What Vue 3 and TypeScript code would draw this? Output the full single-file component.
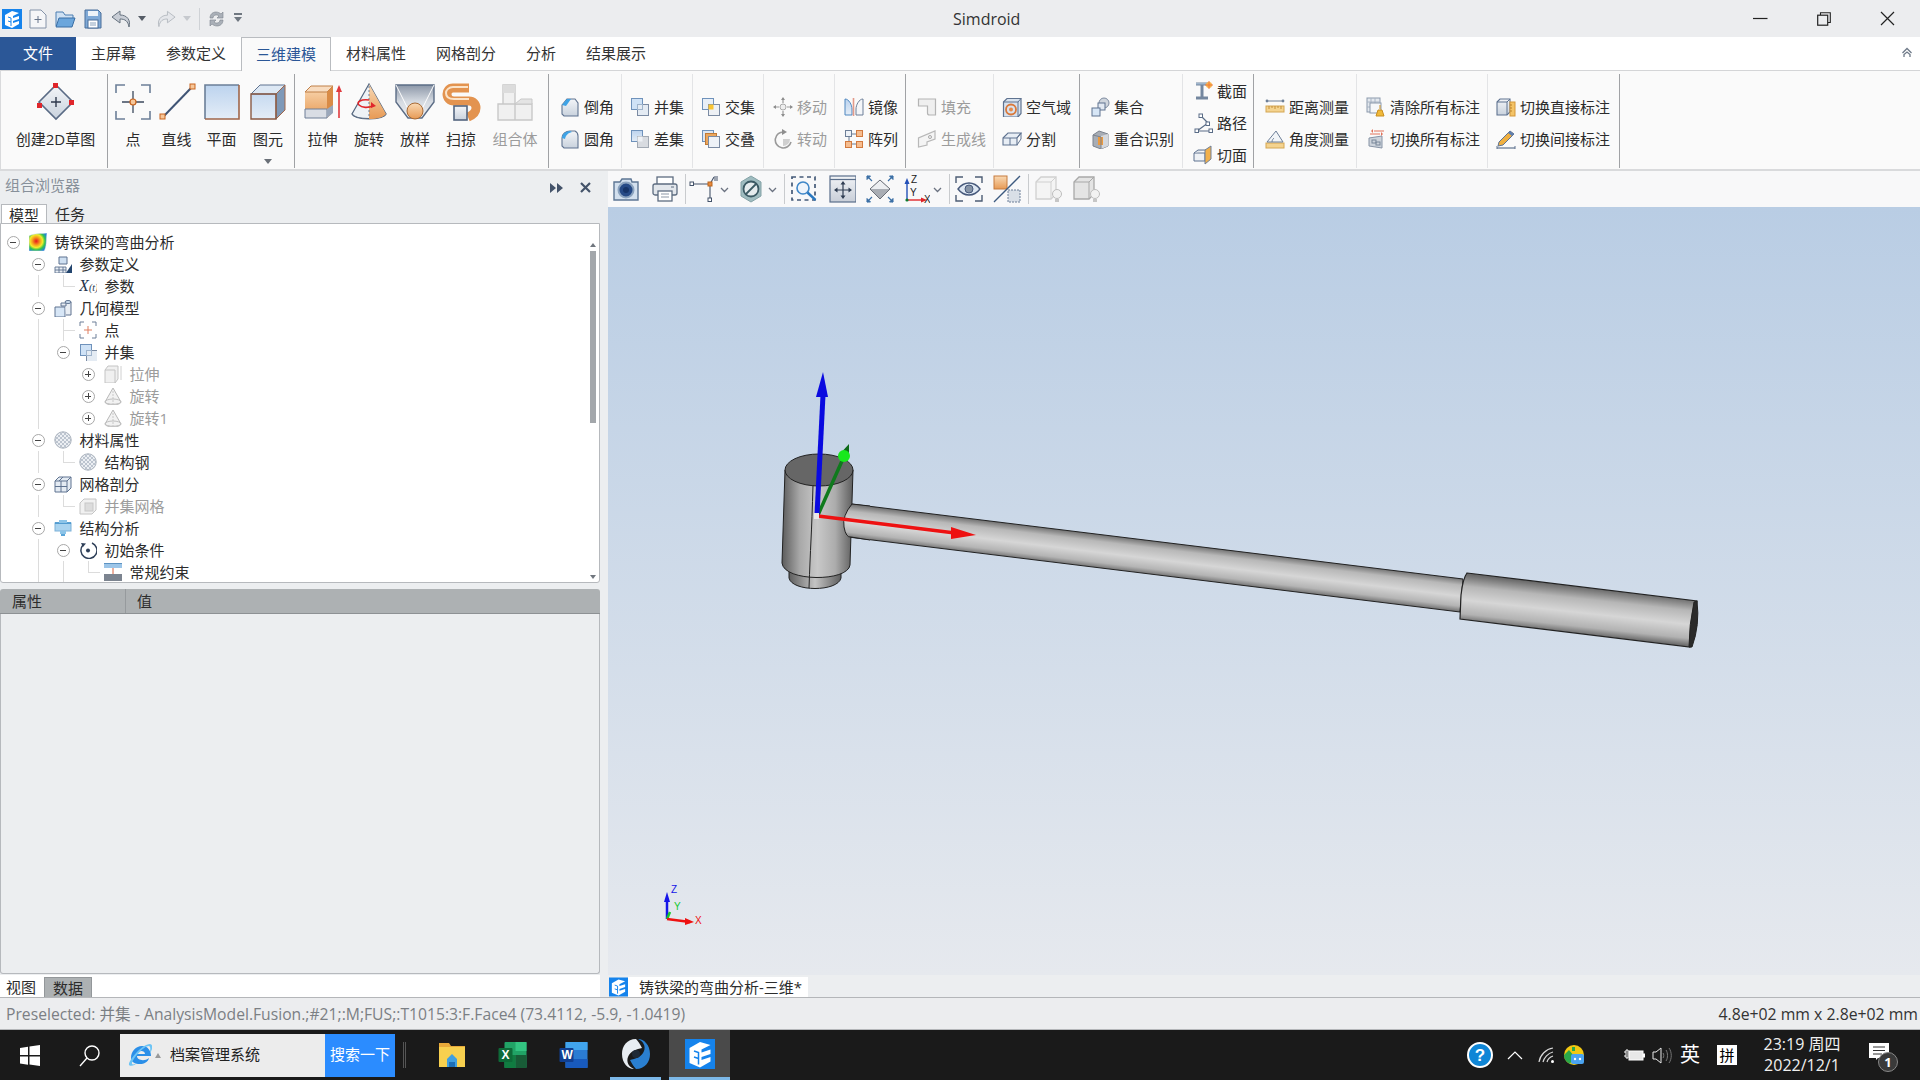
<script setup lang="ts">
interface RibbonItem { label: string; icon: string; w?: number; muted?: boolean; more?: boolean }
interface LargeGroup { w: number; pad: number; dark: boolean; items: RibbonItem[] }
interface SmallGroup { w: number; pad: number; dark: boolean; top: number; items: RibbonItem[] }
interface TreeRow { cells: string[]; exp: string; icon: string; label: string; muted?: boolean }

const tabs = ['主屏幕', '参数定义', '三维建模', '材料属性', '网格剖分', '分析', '结果展示']

const largeA: LargeGroup = {
  w: 108, pad: 3, dark: true,
  items: [{ label: '创建2D草图', icon: 'sketch', w: 103 }]
}
const largeB: LargeGroup = {
  w: 187, pad: 3, dark: true,
  items: [
    { label: '点', icon: 'point', w: 44 },
    { label: '直线', icon: 'line', w: 43 },
    { label: '平面', icon: 'plane', w: 47 },
    { label: '图元', icon: 'prim', w: 46, more: true }
  ]
}
const largeC: LargeGroup = {
  w: 254, pad: 4, dark: true,
  items: [
    { label: '拉伸', icon: 'extrude', w: 47 },
    { label: '旋转', icon: 'revolve', w: 46 },
    { label: '放样', icon: 'loft', w: 46 },
    { label: '扫掠', icon: 'sweep', w: 46 },
    { label: '组合体', icon: 'combo', w: 62, muted: true }
  ]
}
const largeGroups = [largeA, largeB, largeC]

const smallGroups: SmallGroup[] = [
  { w: 73, pad: 11, dark: false, top: 17, items: [{ label: '倒角', icon: 'chamfer' }, { label: '圆角', icon: 'fillet' }] },
  { w: 71, pad: 8, dark: false, top: 17, items: [{ label: '并集', icon: 'union' }, { label: '差集', icon: 'diff' }] },
  { w: 71, pad: 8, dark: false, top: 17, items: [{ label: '交集', icon: 'inter' }, { label: '交叠', icon: 'overlap' }] },
  { w: 71, pad: 9, dark: false, top: 17, items: [{ label: '移动', icon: 'move', muted: true }, { label: '转动', icon: 'rotate', muted: true }] },
  { w: 71, pad: 9, dark: true, top: 17, items: [{ label: '镜像', icon: 'mirror' }, { label: '阵列', icon: 'array' }] },
  { w: 88, pad: 11, dark: false, top: 17, items: [{ label: '填充', icon: 'fill', muted: true }, { label: '生成线', icon: 'genline', muted: true }] },
  { w: 86, pad: 8, dark: true, top: 17, items: [{ label: '空气域', icon: 'air' }, { label: '分割', icon: 'split' }] },
  { w: 103, pad: 10, dark: false, top: 17, items: [{ label: '集合', icon: 'set' }, { label: '重合识别', icon: 'coin' }] },
  { w: 71, pad: 10, dark: true, top: 1, items: [{ label: '截面', icon: 'section' }, { label: '路径', icon: 'path' }, { label: '切面', icon: 'cut' }] },
  { w: 103, pad: 11, dark: false, top: 17, items: [{ label: '距离测量', icon: 'dist' }, { label: '角度测量', icon: 'angle' }] },
  { w: 131, pad: 9, dark: false, top: 17, items: [{ label: '清除所有标注', icon: 'clear' }, { label: '切换所有标注', icon: 'swap' }] },
  { w: 132, pad: 8, dark: true, top: 17, items: [{ label: '切换直接标注', icon: 'direct' }, { label: '切换间接标注', icon: 'indirect' }] }
]

const toolSpec = [
  { n: 'camera', x: 612, w: 28 }, { n: 'printer', x: 651, w: 28 }, { n: 'sep', x: 685, w: 1 },
  { n: 'axis', x: 689, w: 29 }, { n: 'chev', x: 720, w: 9 }, { n: 'hex', x: 739, w: 24 },
  { n: 'chev', x: 768, w: 9 }, { n: 'sep', x: 784, w: 1 }, { n: 'zoombox', x: 790, w: 28 },
  { n: 'pan', x: 829, w: 27 }, { n: 'diamond', x: 866, w: 28 }, { n: 'xyz', x: 904, w: 26 },
  { n: 'chev', x: 933, w: 9 }, { n: 'sep', x: 949, w: 1 }, { n: 'eye', x: 955, w: 28 },
  { n: 'secview', x: 993, w: 28 }, { n: 'sep', x: 1028, w: 1 }, { n: 'bulb1', x: 1034, w: 28 },
  { n: 'bulb2', x: 1072, w: 28 }
]
let toolEnd = 608
const tools = toolSpec.map(t => {
  const ml = t.x - toolEnd
  toolEnd = t.x + t.w
  return { ...t, ml }
})

const tree: TreeRow[] = [
  { cells: [], exp: '-', icon: 'root', label: '铸铁梁的弯曲分析' },
  { cells: [''], exp: '-', icon: 'param', label: '参数定义' },
  { cells: ['', 'g', 'e'], exp: 'none', icon: 'xt', label: '参数' },
  { cells: [''], exp: '-', icon: 'geom', label: '几何模型' },
  { cells: ['', 'g', 't'], exp: 'none', icon: 'tpoint', label: '点' },
  { cells: ['', 'g'], exp: '-', icon: 'union', label: '并集' },
  { cells: ['', 'g', ''], exp: '+', icon: 'tbox', label: '拉伸', muted: true },
  { cells: ['', 'g', ''], exp: '+', icon: 'tcone', label: '旋转', muted: true },
  { cells: ['', 'g', ''], exp: '+', icon: 'tcone', label: '旋转1', muted: true },
  { cells: [''], exp: '-', icon: 'ball', label: '材料属性' },
  { cells: ['', 'g', 'e'], exp: 'none', icon: 'ball', label: '结构钢' },
  { cells: [''], exp: '-', icon: 'mesh', label: '网格剖分' },
  { cells: ['', 'g', 'e'], exp: 'none', icon: 'tmesh', label: '并集网格', muted: true },
  { cells: [''], exp: '-', icon: 'struct', label: '结构分析' },
  { cells: ['', 'g'], exp: '-', icon: 'init', label: '初始条件' },
  { cells: ['', 'g', 'g', 'e'], exp: 'none', icon: 'fix', label: '常规约束' }
]

const ln = '#5f7390'
const icons: Record<string, string> = {
  // large ribbon icons, 40 box
  sketch: `<path d="M20 3 37 20 20 37 3 20z" fill="url(#gSteel)" stroke="#5a6b85" stroke-width="1.6"/><path d="M20 15v10M15 20h10" stroke="#2f3a4d" stroke-width="1.4"/><rect x="17" y="1" width="5" height="5" fill="#e0262b"/><rect x="1" y="21" width="5" height="5" fill="#e0262b"/><rect x="33" y="18" width="5" height="5" fill="#e0262b"/>`,
  point: `<path d="M3 11V3h9M28 3h9v8M3 29v8h9M37 29v8h-9" fill="none" stroke="#6c7f98" stroke-width="1.6"/><path d="M9 20h22M20 9v22" stroke="#3c4a5e" stroke-width="1.3"/><circle cx="20" cy="20" r="3" fill="#f6c79a" stroke="#c9641e" stroke-width="1.2"/>`,
  line: `<path d="M6 35 35 5" stroke="#3f5475" stroke-width="2"/><rect x="3" y="32" width="5" height="5" fill="#f6c79a" stroke="#c9641e"/><rect x="33" y="2" width="5" height="5" fill="#f6c79a" stroke="#c9641e"/>`,
  plane: `<rect x="3" y="3" width="34" height="34" fill="url(#gBlue)"/><path d="M3 37V3h34" fill="none" stroke="#6b7f98" stroke-width="1.6"/><path d="M3 37h34V3" fill="none" stroke="#a0664a" stroke-width="1.6"/>`,
  prim: `<path d="M3 12 12 3h25v25l-9 9H3z" fill="url(#gBlue)"/><path d="M3 12 12 3h25l-9 9z" fill="#dde8f4" stroke="#5f7390"/><path d="M28 12 37 3v25l-9 9z" fill="#7f99b8" stroke="#a0664a"/><path d="M3 12v25h25V12z" fill="none" stroke="#8a5a44" stroke-width="1.4"/>`,
  extrude: `<path d="M2 10 8 4h22v26l-6 6H2z" fill="url(#gOrange)"/><path d="M2 10 8 4h22l-6 6z" fill="#f8dcc0" stroke="#c08048"/><path d="M24 10l6-6v26l-6 6z" fill="#d98b46"/><path d="M2 27h22v9H2z" fill="#d9dde4" stroke="#6e7f97"/><path d="M24 27l6-4v8l-6 5z" fill="#9aa7ba"/><path d="M36 36V7" stroke="#e03a3e" stroke-width="1.6"/><path d="M36 3l-3 7h6z" fill="#e03a3e"/>`,
  revolve: `<ellipse cx="20" cy="32" rx="17" ry="5" fill="#e8edf3" stroke="#55677f"/><path d="M20 2 3 32c4 6 30 6 34 0z" fill="#eef2f6" stroke="#55677f" stroke-width="1.2"/><path d="M20 2v35c8 0 15-2 17-5z" fill="url(#gOrange)"/><path d="M20 4v30" stroke="#6d7f98" stroke-dasharray="2 2"/><path d="M20 18c-8-1-13 2-10 5 3 3 9 3 14 1" fill="none" stroke="#e0262b" stroke-width="1.6"/><path d="M27 24l-5-4 0 6z" fill="#e0262b"/>`,
  loft: `<path d="M1 3h38v17L27 36H13L1 20z" fill="url(#gCone)" stroke="#5b6c85" stroke-width="1.4"/><path d="M1 3l12 24M39 3 27 27" stroke="#fff" stroke-width="1"/><ellipse cx="20" cy="29" rx="8" ry="8" fill="url(#gOrange)" stroke="#a86a35"/>`,
  sweep: `<path d="M28 6H12C8 6 6 9 6 12c0 4 3 7 7 7h15c4 0 7 3 7 7 0 4-3 7-8 9" fill="none" stroke="#e3934f" stroke-width="9"/><path d="M27 5H12C8 5 5 8 5 11c0 4 3 6 8 6h15" fill="none" stroke="#fbe3c8" stroke-width="2"/><rect x="13" y="24" width="13" height="14" fill="url(#gSteel)" stroke="#53657f" stroke-width="1.6"/>`,
  combo: `<path d="M3 22h17v16H3zM20 22h17v16H20zM8 3h12v19H8z" fill="#f0f0f0" stroke="#c8c8c8" stroke-width="1.4"/><path d="M20 22l6-5h11v5z" fill="#e4e4e4" stroke="#c8c8c8"/><path d="M8 3h12v8H8z" fill="#dcdcdc"/>`,
  // small ribbon icons, 20 box
  chamfer: `<path d="M2 8 7 2h8l3 4v13H4l-2-2z" fill="url(#gSteel)" stroke="${ln}" stroke-width="1.1"/><path d="M2 8 7 2h4L6 9z" fill="#3ea3e6"/>`,
  fillet: `<path d="M2 9C2 5 6 2 10 2h5c2 1 3 3 3 5v12H4l-2-2z" fill="url(#gSteel)" stroke="${ln}" stroke-width="1.1"/><path d="M2 9C2 5 6 2 10 2l2 1C8 4 6 6 5 10z" fill="#3ea3e6"/>`,
  union: `<rect x="1.5" y="1.5" width="11" height="11" fill="#cfe2f6" stroke="#6f92bb"/><rect x="7.5" y="7.5" width="11" height="11" fill="#e4ebf3" stroke="#7b8ba3"/><rect x="7.5" y="7.5" width="5" height="5" fill="none" stroke="#9fb4cc"/>`,
  diff: `<rect x="1.5" y="1.5" width="11" height="11" fill="url(#gBlue)" stroke="#6f92bb"/><rect x="7.5" y="7.5" width="11" height="11" fill="#d8dbe0" stroke="#a2a9b3"/><rect x="7.5" y="7.5" width="5" height="5" fill="#eef1f5"/>`,
  inter: `<rect x="1.5" y="1.5" width="11" height="11" fill="#e8eff8" stroke="#6f92bb"/><rect x="7.5" y="7.5" width="11" height="11" fill="#eef1f5" stroke="#7b8ba3"/><rect x="7.5" y="7.5" width="5" height="5" fill="#f9c532"/>`,
  overlap: `<rect x="1.5" y="1.5" width="11" height="11" fill="#dbe6f2" stroke="#6f92bb"/><rect x="4.5" y="4.5" width="11" height="11" fill="#eba65c" stroke="#c07a36"/><rect x="7.5" y="7.5" width="11" height="11" fill="#eef2f7" stroke="#7b8ba3"/>`,
  move: `<circle cx="10" cy="10" r="3" fill="#eee" stroke="#aaa"/><path d="M10 1v5M10 14v5M1 10h5M14 10h5" stroke="#9a9a9a" stroke-width="1.2"/><path d="M10 0l2 3H8zM10 20l2-3H8zM0 10l3-2v4zM20 10l-3-2v4z" fill="#8e8e8e"/>`,
  rotate: `<path d="M11 3a8 8 0 1 0 7 10" fill="none" stroke="#9a9a9a" stroke-width="1.6"/><path d="M9 0l5 3-5 3z" fill="#8e8e8e"/><path d="M10 10h7a7 7 0 0 1-7 7z" fill="#cfcfcf"/>`,
  mirror: `<path d="M1 2c4 0 7 6 7 10v6H1z" fill="url(#gBlue)" stroke="#4e87c0"/><path d="M9.5 1v18" stroke="#e39a8a" stroke-width="1.6"/><path d="M19 2c-4 0-7 6-7 10v6h7z" fill="#f4f6f9" stroke="#6d7f98"/>`,
  array: `<path d="M5 5h10M5 5v10M5 15h10" stroke="#687a94"/><rect x="1.5" y="1.5" width="6" height="6" fill="#eef2f7" stroke="#6d7f98"/><rect x="12.5" y="1.5" width="6" height="6" fill="#f6bd8f" stroke="#d27a3f"/><rect x="1.5" y="12.5" width="6" height="6" fill="#f6bd8f" stroke="#d27a3f"/><rect x="12.5" y="12.5" width="6" height="6" fill="#f6bd8f" stroke="#d27a3f"/>`,
  fill: `<path d="M1.5 2h17v16h-6a2 2 0 0 1-2-2V9h-9z" fill="#efefef" stroke="#b4b4b4" stroke-width="1.2"/>`,
  genline: `<path d="M1.5 18V9L18 2v8L10 13v3z" fill="#f4f4f4" stroke="#b8b8b8" stroke-width="1.2"/><circle cx="13" cy="8" r="1.5" fill="none" stroke="#a8a8a8"/>`,
  air: `<path d="M1.5 5 5 1.5h14v15L16 20H1.5z" fill="#d8e2ee" stroke="#5f7390" stroke-width="1.2"/><path d="M1.5 5H16v15M16 5l3-3.5" fill="none" stroke="#5f7390"/><circle cx="9" cy="12.5" r="5" fill="none" stroke="#d9783a" stroke-width="1.8"/><circle cx="9" cy="12.5" r="2" fill="#e88a4a"/>`,
  split: `<path d="M1 9l5-5h13l-4 5v7H1z" fill="#e8eef5" stroke="${ln}" stroke-width="1.1"/><path d="M8 9v7M1 9h14l4-5v6l-4 6" fill="none" stroke="${ln}"/>`,
  set: `<circle cx="14" cy="6" r="5" fill="#cfd5dd" stroke="#7d8ba0"/><rect x="8" y="6" width="7" height="7" fill="#e2e9f2" stroke="${ln}"/><rect x="2" y="11" width="8" height="8" fill="#d7e6f6" stroke="${ln}"/>`,
  coin: `<path d="M3 6l6-4 9 3v12l-7 3-8-3z" fill="#a8adb5" stroke="#7c838e"/><path d="M11 7l7-2v12l-7 3z" fill="#d5d8dd"/><rect x="8" y="8" width="5" height="8" fill="#ec9a3e"/><path d="M3 6l8 2v12" fill="none" stroke="#7c838e"/>`,
  section: `<path d="M3 3h12M3 17h12M9 3v14" stroke="#74879f" stroke-width="3"/><path d="M3 2h12v1.5H3z" fill="#9fb5cc"/><circle cx="16" cy="4" r="3" fill="#f7b24a"/><path d="M16 0v8M12 4h8" stroke="#ef7a3b"/>`,
  path: `<path d="M8 3l7 7-11 8h14" fill="none" stroke="#5a6d87" stroke-width="1.2"/><rect x="6" y="1" width="3.5" height="3.5" fill="#fff" stroke="#5a6d87"/><rect x="13" y="9" width="3.5" height="3.5" fill="#fff" stroke="#5a6d87"/><rect x="2" y="16" width="3.5" height="3.5" fill="#fff" stroke="#5a6d87"/><rect x="16" y="16" width="3.5" height="3.5" fill="#fff" stroke="#5a6d87"/>`,
  cut: `<path d="M1 8h11v8H1z" fill="#eef1f5" stroke="${ln}"/><path d="M1 8l4-3h8" fill="#dfe5ec" stroke="${ln}"/><path d="M12 5l6-4v13l-6 5z" fill="#f2b04a" stroke="#6f7f96"/>`,
  dist: `<rect x="1" y="9" width="18" height="6" fill="#f4d38f" stroke="#d4a652"/><path d="M4 9v3M7 9v2M10 9v3M13 9v2M16 9v3" stroke="#c48f3a"/><path d="M2 4h16" stroke="#6d7f98"/><circle cx="2" cy="4" r="1.4" fill="#6d7f98"/><circle cx="18" cy="4" r="1.4" fill="#6d7f98"/>`,
  angle: `<rect x="1" y="14" width="18" height="5" fill="#f4d38f" stroke="#d4a652"/><path d="M2 13 11 2l7 11z" fill="#f2f5f8" stroke="#6d7f98"/><path d="M7 13c0-2 1-3 2-4" fill="none" stroke="#6d7f98"/>`,
  clear: `<rect x="1" y="1" width="13" height="14" fill="#e3e8ee" stroke="#8b99ac"/><path d="M1 5h13M5 1v14M9 1v14M1 10h13" stroke="#a8b4c4"/><rect x="4" y="6" width="11" height="10" fill="#f5f7f9" stroke="#8b99ac"/><path d="M14 8v4M12 13h4l2 6h-8z" fill="#f0b93a" stroke="#c98e1e"/>`,
  swap: `<path d="M3 9l13-2v12L3 17z" fill="#cdd3db" stroke="#8794a6"/><rect x="6" y="11" width="4" height="3" fill="none" stroke="#79879a"/><rect x="10" y="13" width="4" height="3" fill="none" stroke="#79879a"/><path d="M8 2h10M4 5h10" stroke="#e2725b" stroke-width="1.2"/><path d="M7 0v4L5 2zM15 3v4l2-2z" fill="#e2725b"/>`,
  direct: `<path d="M1 5l3-3h10v13l-3 3H1z" fill="url(#gSteel)" stroke="${ln}" stroke-width="1.1"/><path d="M1 5h10v13M11 5l3-3" fill="none" stroke="${ln}"/><rect x="14" y="5" width="5" height="14" fill="#f4c467" stroke="#d4973a"/><path d="M14 8h2M14 11h2M14 14h2" stroke="#b9822d"/>`,
  indirect: `<path d="M3 13 14 2l4 3L7 16l-5 1z" fill="#f0b040" stroke="#5f7390"/><path d="M14 2l4 3-2 2-4-3z" fill="#5f7fb0"/><path d="M1 19h18" stroke="#5f7390" stroke-width="1.2"/><path d="M1 17v4M19 17v4" stroke="#5f7390"/>`,
  // toolbar icons, 28 box
  camera: `<path d="M2 7h6l2-3h9l1 3h6v18H2z" fill="#d3e0ee" stroke="#5d7694" stroke-width="1.4"/><circle cx="14" cy="15" r="7.5" fill="#264a86" stroke="#8ba3bf" stroke-width="2"/><circle cx="14" cy="15" r="3" fill="#163468"/>`,
  printer: `<rect x="6" y="2" width="16" height="8" fill="#fff" stroke="#5d6c80" stroke-width="1.3"/><rect x="2" y="9" width="24" height="11" rx="2" fill="#e3e7ec" stroke="#5d6c80" stroke-width="1.3"/><rect x="7" y="16" width="14" height="10" fill="#fff" stroke="#5d6c80" stroke-width="1.3"/><path d="M10 19h8M10 22h8" stroke="#8d98a7"/><path d="M20 12h3" stroke="#5d6c80"/>`,
  axis: `<path d="M3 9h18l4-7M21 9v15" fill="none" stroke="#44536a" stroke-width="1.1"/><rect x="1" y="7" width="3.5" height="3.5" fill="#fff" stroke="#44536a"/><rect x="19" y="7" width="4" height="4" fill="#e98a3b" stroke="#b9641e"/><rect x="19" y="23" width="3.5" height="3.5" fill="#fff" stroke="#44536a"/><path d="M26 1v5M28 1v5" stroke="#44536a"/>`,
  chev: `<path d="M1 3l3.5 3.5L8 3" fill="none" stroke="#6b7280" stroke-width="1.3"/>`,
  hex: `<path d="M12 1l10 6v14l-10 6-10-6V7z" fill="#9fbcc0" stroke="#84a2a6"/><circle cx="12" cy="14" r="7.5" fill="#e5ecee" stroke="#3b5a64" stroke-width="1.8"/><path d="M7 19l10-10" stroke="#3b5a64" stroke-width="1.8"/>`,
  zoombox: `<rect x="2" y="2" width="23" height="23" fill="none" stroke="#445a78" stroke-width="1.7" stroke-dasharray="4 3.5"/><circle cx="13" cy="13" r="6" fill="#eef4fb" stroke="#3f87c8" stroke-width="1.6"/><path d="M17.5 17.5l8 7.5" stroke="#2a78c0" stroke-width="2.4"/>`,
  pan: `<rect x="1" y="1" width="26" height="26" fill="url(#gPan)" stroke="#5a6e8a" stroke-width="1.2"/><path d="M1 4.5h26" stroke="#5a6e8a" stroke-width="1.2"/><path d="M14 8v14M7 15h14" stroke="#2f3d52" stroke-width="1.2"/><path d="M14 6l-2.5 3.5h5zM14 24l-2.5-3.5h5zM5 15l3.5-2.5v5zM23 15l-3.5-2.5v5z" fill="#2f3d52"/>`,
  diamond: `<path d="M14 5 24 14 14 24 4 14z" fill="#a9adb4"/><path d="M14 5 24 14H4z" fill="#eceef1"/><path d="M14 5 24 14 14 24 4 14z" fill="none" stroke="#6a6f78"/><path d="M1 1l5 5M27 1l-5 5M1 27l5-5M27 27l-5-5" stroke="#3b6fa5" stroke-width="1.2"/><path d="M1 1h3.5L1 4.5zM27 1h-3.5L27 4.5zM1 27h3.5L1 23.500zM27 27h-3.500L27 23.500z" fill="#3b6fa5" stroke="#3b6fa5"/>`,
  xyz: `<path d="M3 25V6" stroke="#2350b8" stroke-width="1.4"/><path d="M3 3l-2.500 6h5z" fill="#2350b8"/><path d="M3 25h16" stroke="#e0262b" stroke-width="1.4"/><path d="M23 25l-6-2.500v5z" fill="#e0262b"/><circle cx="3" cy="25" r="1.600" fill="#0c7a2e"/><text x="7" y="8" font-size="10" fill="#222" font-family="Liberation Sans">Z</text><text x="6" y="21" font-size="10" fill="#222" font-family="Liberation Sans">Y</text><text x="20" y="28" font-size="10" fill="#222" font-family="Liberation Sans">X</text>`,
  eye: `<path d="M1 8V2h7M20 2h7v6M1 20v6h7M27 20v6h-7" fill="none" stroke="#4c5c74" stroke-width="1.4"/><path d="M3 14c6-8 16-8 22 0-6 8-16 8-22 0z" fill="#dde6f1" stroke="#46587a" stroke-width="1.4"/><circle cx="14" cy="14" r="4" fill="#8794a6" stroke="#46587a"/>`,
  secview: `<rect x="1" y="1" width="13" height="13" fill="url(#gOrange)" stroke="#c57a3e"/><path d="M1 27 27 1" stroke="#3d5a80" stroke-width="1.3"/><rect x="15" y="15" width="12" height="12" fill="#d9dfe7" stroke="#6d7f98" stroke-dasharray="2 1"/>`,
  bulb1: `<path d="M2 7l5-5h15v17l-5 5H2z" fill="#f4f4f4" stroke="#d0d0d0" stroke-width="1.3"/><path d="M2 7h15v17M17 7l5-5" fill="none" stroke="#d0d0d0"/><circle cx="23" cy="19" r="4.500" fill="#f2f2f2" stroke="#bdbdbd"/><path d="M21 24h4v3h-4z" fill="#c6c6c6"/>`,
  bulb2: `<path d="M2 7l5-5h15v17l-5 5H2z" fill="#e4e4e4" stroke="#a8a8a8" stroke-width="1.3"/><path d="M2 7h15v17M17 7l5-5" fill="none" stroke="#a8a8a8"/><circle cx="23" cy="19" r="4.500" fill="#f2f2f2" stroke="#bdbdbd"/><path d="M21 24h4v3h-4z" fill="#c6c6c6"/>`,
  // tree icons
  root: `<path d="M0 3c5-3 12-2 18-3-1 6 0 14-3 18H0z" fill="url(#gRainbow)" stroke="#d8dde3" stroke-width=".5"/>`,
  param: `<path d="M5 9V2h8v7z" fill="#cfe0f2" stroke="#5f7390"/><path d="M1 12h11v6H1zM1 15h11M5 12v6M9 12v6" fill="#e9eef4" stroke="#5f7390" stroke-width=".9"/><path d="M18 9v9h-6z" fill="#23456e"/>`,
  xt: `<text x="0" y="14" font-family="Liberation Serif" font-style="italic" font-size="16" fill="#23334a">X</text><text x="10" y="14" font-family="Liberation Serif" font-style="italic" font-size="10" fill="#23334a">(t)</text>`,
  geom: `<path d="M1 8h10v10H1z" fill="#d7e6f6" stroke="#5f7390"/><path d="M7 4h5v3h-5zM11 3h6v13h-5" fill="#e9eef4" stroke="#5f7390"/><ellipse cx="14" cy="3" rx="3" ry="1.500" fill="#cfe0f2" stroke="#5f7390"/>`,
  tpoint: `<path d="M1 5V1h4M13 1h4v4M1 13v4h4M17 13v4h-4" fill="none" stroke="#6d7f98"/><path d="M5 9h8M9 5v8" stroke="#df7e60"/>`,
  tbox: `<path d="M1 5l3-4h10v13l-3 4H1z" fill="#f0f0f0" stroke="#c4c4c4"/><path d="M1 5h10v13" fill="none" stroke="#c4c4c4"/><path d="M17 1v14" stroke="#d0d0d0"/>`,
  tcone: `<path d="M9 1 1 15c1 3 15 3 16 0z" fill="#f2f2f2" stroke="#b8b8b8"/><path d="M9 1v16" stroke="#c8c8c8" stroke-dasharray="2 1"/><ellipse cx="9" cy="15" rx="8" ry="3" fill="none" stroke="#c0c0c0"/>`,
  ball: `<circle cx="9" cy="9" r="8.200" fill="url(#pDots)" stroke="#aab2bd"/>`,
  mesh: `<path d="M1 6l4-4h12v11l-4 4H1z" fill="#e4ebf3" stroke="#5f7390"/><path d="M1 6h12v11M13 6l4-4M1 11.500h12M7 6v11M9 2 5 6" fill="none" stroke="#5f7390"/>`,
  tmesh: `<path d="M1 6l4-4h12v11l-4 4H1z" fill="#f1f1f1" stroke="#c4c4c4"/><rect x="6" y="6" width="8" height="8" fill="#dcdcdc" stroke="#c8c8c8"/>`,
  struct: `<rect x="1" y="4" width="16" height="8" fill="#a9d3ef" stroke="#7cb1d8"/><path d="M1 4h16" stroke="#3c8fca" stroke-width="1.500"/><rect x="5" y="1" width="8" height="3" fill="#8cc4e8"/><rect x="6" y="12" width="6" height="3" fill="#8cc4e8"/><rect x="7" y="15" width="4" height="2" fill="#5aa5d8"/>`,
  init: `<path d="M13 2a8 8 0 1 1-9 2" fill="none" stroke="#2e3f58" stroke-width="1.500"/><path d="M2 2l5 .5L4 6z" fill="#2e3f58"/><circle cx="9" cy="9.500" r="2" fill="#2e3f58"/>`,
  fix: `<rect x="0" y="0" width="18" height="5" fill="#9cc5e8"/><path d="M0 .5h18" stroke="#5d93c2"/><path d="M9 5v7" stroke="#d8603e"/><rect x="0" y="11" width="18" height="7" fill="#7c8490"/>`,
  // taskbar icons
  win: `<path d="M1 4l8-1.200v8.200H1zM10.500 2.600 21 1v10H10.500zM1 12.500h8v8.200L1 19.500zM10.500 12.500H21V22l-10.500-1.500z" fill="#fff"/>`,
  search: `<circle cx="13" cy="9" r="7" fill="none" stroke="#fff" stroke-width="1.400"/><path d="M8 14 1 22" stroke="#fff" stroke-width="1.400"/>`,
  ie: `<path d="M3 15c0-7 5-12 11-12s9 5 9 10H9c0 4 7 6 12 2-1 4-5 6-9 6-5 0-9-2-9-6zm6-4h8c0-4-7-4-8 0z" fill="#2b8fe8"/><path d="M1 22C0 18 14 1 22 1c4 1 2 6 0 9 0-3 1-6-1-7C15 3 3 18 4 21c1 1 3 0 5-1-2 2-6 4-8 2z" fill="#6cc4f5"/>`,
  folder: `<path d="M1 2h10l2 3h14v20H1z" fill="#e8a93a"/><rect x="1" y="6" width="26" height="20" fill="#f7d04f"/><path d="M9 18l5-5 5 5v8H9z" fill="#3f9fe0"/><rect x="11" y="21" width="6" height="5" fill="#1c6fb8"/>`,
  excel: `<rect x="6" y="1" width="22" height="26" rx="1" fill="#21a366"/><rect x="17" y="1" width="11" height="9" fill="#33c481"/><rect x="6" y="14" width="11" height="13" fill="#107c41"/><rect x="17" y="14" width="11" height="13" fill="#185c37"/><rect x="0" y="7" width="14" height="14" rx="1" fill="#0e6a38"/><text x="3" y="18" font-size="12" font-weight="700" fill="#fff" font-family="Liberation Sans">X</text>`,
  word: `<rect x="6" y="1" width="22" height="26" rx="1" fill="#2b7cd3"/><rect x="6" y="1" width="22" height="8" fill="#41a5ee"/><rect x="6" y="18" width="22" height="9" fill="#185abd"/><rect x="0" y="7" width="14" height="14" rx="1" fill="#103f91"/><text x="2" y="18" font-size="12" font-weight="700" fill="#fff" font-family="Liberation Sans">W</text>`,
  swirl: `<path d="M15 1C6 1 1 8 1 16c0 9 6 15 12 15-5-2-8-7-6-12 2-6 9-8 14-9-2-4-4-7-6-9z" fill="#e8edf2"/><path d="M15 31c9 0 14-7 14-15C29 7 23 1 17 1c5 2 8 7 6 12-2 6-9 8-14 9 2 4 4 7 6 9z" fill="#2a7fd0"/><circle cx="15" cy="16" r="4" fill="#1f2a36"/>`,
  logo: `<rect width="20" height="20" fill="#1583ec"/><path d="M3 6l7-4 7 2-6 3v2l6-2v3l-6 2v2l6-2v3l-7 4-7-3z" fill="#fff"/><path d="M6 8l3 1v8M6 12l3 1" stroke="#1583ec" stroke-width="1" fill="none"/>`,
  game: `<circle cx="10" cy="10" r="10" fill="#f2c811"/><path d="M0 10a10 10 0 0 0 6 9l4-8-5-6z" fill="#2aa84a"/><path d="M8 2h3v4H8z" fill="#2aa84a"/><rect x="7" y="9" width="13" height="10" rx="2" fill="#4aa3f0"/><circle cx="11" cy="14" r="1.200" fill="#fff"/><circle cx="16" cy="14" r="1.200" fill="#fff"/>`
}
</script>

<template>
  <div class="app">
    <svg class="defs" width="0" height="0" aria-hidden="true">
      <defs>
        <linearGradient id="gBlue" x1="0" y1="0" x2="0" y2="1"><stop offset="0" stop-color="#bcd3ee" /><stop offset="1" stop-color="#e4edf7" /></linearGradient>
        <linearGradient id="gOrange" x1="0" y1="0" x2="0" y2="1"><stop offset="0" stop-color="#f9d9b4" /><stop offset="1" stop-color="#e79a55" /></linearGradient>
        <linearGradient id="gSteel" x1="0" y1="0" x2="0" y2="1"><stop offset="0" stop-color="#f3f5f8" /><stop offset="1" stop-color="#c9d2dd" /></linearGradient>
        <linearGradient id="gCone" x1="0" y1="0" x2="0" y2="1"><stop offset="0" stop-color="#8c97a8" /><stop offset=".5" stop-color="#d5dae1" /><stop offset="1" stop-color="#eef0f3" /></linearGradient>
        <linearGradient id="gPan" x1="0" y1="0" x2="0" y2="1"><stop offset="0" stop-color="#f1f3f6" /><stop offset="1" stop-color="#c8ced8" /></linearGradient>
        <radialGradient id="gRainbow" cx=".4" cy=".45" r=".65"><stop offset="0" stop-color="#e6151e" /><stop offset=".35" stop-color="#f6a51c" /><stop offset=".55" stop-color="#f2ec2a" /><stop offset=".75" stop-color="#36c44c" /><stop offset="1" stop-color="#1e7fe0" /></radialGradient>
        <pattern id="pDots" width="4" height="4" patternUnits="userSpaceOnUse"><rect width="4" height="4" fill="#eceff3" /><rect width="2" height="2" fill="#bcc4cf" /><rect x="2" y="2" width="2" height="2" fill="#bcc4cf" /></pattern>
      </defs>
    </svg>

    <header class="titlebar">
      <div class="qat">
        <svg class="q-logo" width="20" height="20" viewBox="0 0 20 20" v-html="icons.logo"></svg>
        <svg class="q-new" width="18" height="20" viewBox="0 0 18 20"><path d="M1 1h11l5 5v13H1z" fill="#f5f6f8" stroke="#8493a8" /><path d="M9 7v7M5.500 10.500h7" stroke="#66758b" /></svg>
        <svg class="q-open" width="21" height="18" viewBox="0 0 21 18"><path d="M1 16V2h7l2 3h8v3" fill="#cfe1f3" stroke="#4d7fb2" /><path d="M1 17l3-9h16l-3 9z" fill="#6ba6dc" stroke="#3a6fa5" /></svg>
        <svg class="q-save" width="18" height="20" viewBox="0 0 18 20"><path d="M1 1h13l3 3v15H1z" fill="#7fa9d6" stroke="#4a6f9a" /><rect x="4" y="2" width="10" height="5" fill="#eef3f8" /><rect x="4" y="11" width="10" height="8" fill="#fff" stroke="#4a6f9a" /><path d="M6 14h6M6 16h6" stroke="#8aa2bd" /></svg>
        <svg class="q-undo" width="20" height="18" viewBox="0 0 20 18"><path d="M9 1 1 7l8 6V9c5 0 8 2 9 8 2-7-2-12-9-12z" fill="#c8cdd5" stroke="#66727f" /></svg>
        <span class="q-arrow dark"></span>
        <svg class="q-redo" width="19" height="18" viewBox="0 0 20 18"><path d="M11 1l8 6-8 6V9C6 9 3 11 2 17 0 10 4 5 11 5z" fill="#e4e6ea" stroke="#b5bac1" /></svg>
        <span class="q-arrow"></span>
        <span class="q-sep"></span>
        <svg class="q-refresh" width="17" height="18" viewBox="0 0 17 18"><path d="M2 8c0-4 3-6 6-6 2 0 4 1 5 2l2-2v6H9l2-2C9 4 5 5 5 8zM15 10c0 4-3 6-6 6-2 0-4-1-5-2l-2 2v-6h6l-2 2c2 2 6 1 6-2z" fill="#aab0b8" stroke="#7d848d" stroke-width=".6" /></svg>
        <span class="q-custom"></span>
      </div>
      <div class="app-title">Simdroid</div>
      <div class="win-ctl">
        <svg width="15" height="15" viewBox="0 0 15 15"><path d="M0 7.500h14.500" stroke="#222" stroke-width="1.200" /></svg>
        <svg width="14" height="14" viewBox="0 0 14 14"><path d="M3.500 3V.7h9.800v9.800H11" fill="none" stroke="#222" stroke-width="1.100" /><rect x=".7" y="3.200" width="10" height="10" fill="none" stroke="#222" stroke-width="1.200" /></svg>
        <svg width="15" height="15" viewBox="0 0 15 15"><path d="M1 1l13 13M14 1 1 14" stroke="#222" stroke-width="1.200" /></svg>
      </div>
    </header>

    <nav class="menubar">
      <span class="file-tab">文件</span>
      <span v-for="t in tabs" :key="t" class="menu-tab" :class="{ active: t === '三维建模' }">{{ t }}</span>
      <svg class="collapse" width="12" height="12" viewBox="0 0 12 12"><path d="M1.500 6 6 1.500 10.500 6M3 10V7.500L6 5l3 2.500V10" fill="none" stroke="#6f7a88" stroke-width="1.300" /></svg>
    </nav>

    <section class="ribbon">
      <div v-for="(g, i) in largeGroups" :key="i" class="r-group dark" :style="{ width: g.w + 'px', paddingLeft: g.pad + 'px' }">
        <div v-for="it in g.items" :key="it.label" class="r-large" :class="{ muted: it.muted }" :style="{ width: it.w + 'px' }">
          <svg width="40" height="40" viewBox="0 0 40 40" v-html="icons[it.icon]"></svg>
          <span class="r-label">{{ it.label }}</span>
          <span v-if="it.more" class="r-more"></span>
        </div>
      </div>
      <div v-for="(g, i) in smallGroups" :key="'s' + i" class="r-group col" :class="{ dark: g.dark }" :style="{ width: g.w + 'px', padding: g.top + 'px 0 0 ' + g.pad + 'px' }">
        <div v-for="it in g.items" :key="it.label" class="r-small" :class="{ muted: it.muted }">
          <svg width="20" height="20" viewBox="0 0 20 20" v-html="icons[it.icon]"></svg>
          <span>{{ it.label }}</span>
        </div>
      </div>
    </section>

    <main class="workspace">
      <aside class="left">
        <div class="left-head">
          <span class="left-title">组合浏览器</span>
          <svg class="dock" width="13" height="12" viewBox="0 0 13 12"><path d="M0 1l6 5-6 5zM7 1l6 5-6 5z" fill="#44536a" /></svg>
          <svg class="close" width="11" height="11" viewBox="0 0 11 11"><path d="M1 1l9 9M10 1l-9 9" stroke="#44536a" stroke-width="2.200" /></svg>
        </div>
        <div class="left-tabs">
          <span class="lt active">模型</span>
          <span class="lt">任务</span>
        </div>
        <div class="tree-box">
          <div class="tree">
            <div v-for="(r, i) in tree" :key="i" class="row" :class="{ muted: r.muted }">
              <span v-for="(c, j) in r.cells" :key="j" class="cell" :class="c"></span>
              <span v-if="r.exp !== 'none'" class="cell exp-cell">
                <span class="exp" :class="{ plus: r.exp === '+' }"></span>
              </span>
              <svg class="t-ic" width="18" height="18" viewBox="0 0 18 18" v-html="icons[r.icon]"></svg>
              <span class="t-text">{{ r.label }}</span>
            </div>
          </div>
          <div class="scroll">
            <span class="sc-up"></span>
            <span class="sc-thumb"></span>
            <span class="sc-down"></span>
          </div>
        </div>
        <div class="prop-head">
          <span class="ph-a">属性</span>
          <span class="ph-b">值</span>
        </div>
        <div class="prop-body"></div>
        <div class="bottom-tabs">
          <span class="bt">视图</span>
          <span class="bt on">数据</span>
        </div>
      </aside>

      <div class="view-col">
        <div class="toolbar">
          <template v-for="(t, i) in tools" :key="i">
            <span v-if="t.n === 'sep'" class="tb-sep" :style="{ marginLeft: t.ml + 'px' }"></span>
            <svg v-else-if="t.n === 'chev'" class="tb-chev" width="9" height="9" viewBox="0 0 9 9" :style="{ marginLeft: t.ml + 'px' }" v-html="icons.chev"></svg>
            <svg v-else :width="t.w" height="28" :viewBox="`0 0 ${t.w} 28`" :style="{ marginLeft: t.ml + 'px' }" v-html="icons[t.n]"></svg>
          </template>
        </div>

        <div class="viewport">
          <svg class="scene" width="1312" height="768" viewBox="608 207 1312 768">
            <defs>
              <linearGradient id="bodyG" gradientUnits="userSpaceOnUse" x1="782" y1="0" x2="853" y2="0">
                <stop offset="0" stop-color="#5c5c5c" /><stop offset=".25" stop-color="#a8a8a8" /><stop offset=".5" stop-color="#c8c8c8" /><stop offset=".75" stop-color="#acacac" /><stop offset="1" stop-color="#5e5e5e" />
              </linearGradient>
              <linearGradient id="lowG" gradientUnits="userSpaceOnUse" x1="789" y1="0" x2="841" y2="0">
                <stop offset="0" stop-color="#5e5e5e" /><stop offset=".5" stop-color="#c4c4c4" /><stop offset="1" stop-color="#5e5e5e" />
              </linearGradient>
              <linearGradient id="barG" gradientUnits="userSpaceOnUse" x1="1000" y1="522" x2="996" y2="555">
                <stop offset="0" stop-color="#6e6e6e" /><stop offset=".22" stop-color="#b8b8b8" /><stop offset=".55" stop-color="#d6d6d6" /><stop offset=".85" stop-color="#b4b4b4" /><stop offset="1" stop-color="#7a7a7a" />
              </linearGradient>
              <linearGradient id="collarG" gradientUnits="userSpaceOnUse" x1="1580" y1="587" x2="1575" y2="633">
                <stop offset="0" stop-color="#6a6a6a" /><stop offset=".25" stop-color="#b6b6b6" /><stop offset=".55" stop-color="#d6d6d6" /><stop offset=".85" stop-color="#b2b2b2" /><stop offset="1" stop-color="#707070" />
              </linearGradient>
            </defs>
            <!-- shaft and grip -->
            <path d="M851 504 1463 579 1460 612 848 537z" fill="url(#barG)" stroke="#222" stroke-width="1" />
            <path d="M1467 573 1697 601 1690 647 1460 619 1461 595Q1463 578 1467 573z" fill="url(#collarG)" stroke="#222" stroke-width="1.200" />
            <path d="M1697 601Q1700 625 1692 647L1689 647Q1689 625 1694 602z" fill="#2a2a2a" stroke="#222" />
            <!-- lower boss -->
            <path d="M789 570V578C792 592 838 592 841 578V570z" fill="url(#lowG)" stroke="#222" stroke-width="1" />
            <!-- body -->
            <path d="M785 470 782 563C784 582 848 582 850 565L853 470z" fill="url(#bodyG)" stroke="#222" stroke-width="1" />
            <ellipse cx="819" cy="470" rx="34" ry="16" fill="#666" stroke="#222" stroke-width="1" />
            <path d="M813 485Q812 520 811 540T809 588" fill="none" stroke="#222" stroke-width="1" />
            <path d="M852 504Q842 516 844 527T851 537L870 540V506z" fill="url(#barG)" />
            <path d="M852 504Q842 516 844 527T851 537" fill="none" stroke="#222" stroke-width="1" />
            <path d="M852 504 870 506M851 537 870 540" stroke="#222" stroke-width="1" />
            <!-- gizmo -->
            <path d="M818 515 846 452" stroke="#0f7a1c" stroke-width="3.500" />
            <path d="M849 444 838 456 849 458z" fill="#0d6a18" />
            <circle cx="844" cy="456" r="6" fill="#17e81c" />
            <path d="M817 515 823 395" stroke="#0a0ae0" stroke-width="5" />
            <path d="M823 372 816 397H828z" fill="#0a0ae0" />
            <path d="M818 516 955 533" stroke="#ee1111" stroke-width="3.500" />
            <path d="M976 535 951 527 951 539z" fill="#ee1111" />
            <rect x="814" y="513" width="5" height="6" fill="#e8e8e8" />
            <!-- corner triad -->
            <path d="M667 919V900" stroke="#1515e8" stroke-width="2.500" />
            <path d="M667 892 664 902H670z" fill="#1515e8" />
            <path d="M667 919 670 912" stroke="#14c82c" stroke-width="2.500" />
            <path d="M667 919 690 922" stroke="#ee1111" stroke-width="2.500" />
            <path d="M694 922 685 918V925z" fill="#ee1111" />
            <text x="671" y="893" class="tri" fill="#1515e8">Z</text>
            <text x="674" y="910" class="tri" fill="#14c82c">Y</text>
            <text x="695" y="924" class="tri" fill="#ee1111">X</text>
          </svg>
        </div>

        <div class="doc-strip">
          <svg width="19" height="20" viewBox="0 0 20 20" v-html="icons.logo"></svg>
          <span class="doc-tab">铸铁梁的弯曲分析-三维*</span>
        </div>
      </div>
    </main>

    <footer class="status">
      <span class="st-left">Preselected: 并集 - AnalysisModel.Fusion.;#21;:M;FUS;:T1015:3:F.Face4 (73.4112, -5.9, -1.0419)</span>
      <span class="st-right">4.8e+02 mm x 2.8e+02 mm</span>
    </footer>

    <div class="taskbar">
      <svg class="tk-win" width="22" height="23" viewBox="0 0 22 23" v-html="icons.win"></svg>
      <svg class="tk-search" width="23" height="23" viewBox="0 0 23 23" v-html="icons.search"></svg>
      <div class="tk-box">
        <svg width="24" height="24" viewBox="0 0 24 24" v-html="icons.ie"></svg>
        <span class="tk-up"></span>
        <span class="tk-query">档案管理系统</span>
        <span class="tk-btn">搜索一下</span>
      </div>
      <span class="tk-sep"></span>
      <svg class="tk-folder" width="28" height="28" viewBox="0 0 28 28" v-html="icons.folder"></svg>
      <svg class="tk-excel" width="29" height="28" viewBox="0 0 28 28" v-html="icons.excel"></svg>
      <svg class="tk-word" width="29" height="28" viewBox="0 0 28 28" v-html="icons.word"></svg>
      <span class="tk-app swirl"><svg width="30" height="32" viewBox="0 0 30 32" v-html="icons.swirl"></svg></span>
      <span class="tk-app cur"><svg width="30" height="30" viewBox="0 0 20 20" v-html="icons.logo"></svg></span>

      <svg class="tr-help" width="26" height="26" viewBox="0 0 26 26"><circle cx="13" cy="13" r="12" fill="#0f86d6" stroke="#fff" stroke-width="2" /><text x="13" y="19" text-anchor="middle" font-size="17" font-weight="700" fill="#fff" font-family="Liberation Sans">?</text></svg>
      <svg class="tr-up" width="16" height="9" viewBox="0 0 16 9"><path d="M1 8l7-7 7 7" fill="none" stroke="#fff" stroke-width="1.200" /></svg>
      <svg class="tr-wifi" width="17" height="17" viewBox="0 0 17 17"><path d="M1 15C2 8 8 2 15 1M5 15C6 11 10 6 15 5M9 15c.5-2 3-5 6-6" fill="none" stroke="#d8d8d8" stroke-width="1.200" /><circle cx="14.500" cy="14.500" r="1.500" fill="#fff" /></svg>
      <svg class="tr-game" width="20" height="20" viewBox="0 0 20 20" v-html="icons.game"></svg>
      <svg class="tr-bat" width="21" height="13" viewBox="0 0 21 13"><path d="M0 3h2M0 7h2M2 1v8h2V1z" stroke="#fff" fill="none" /><rect x="5" y="2" width="14" height="9" fill="#e8e8e8" stroke="#fff" /><rect x="19" y="4.500" width="2" height="4" fill="#fff" /></svg>
      <svg class="tr-vol" width="20" height="19" viewBox="0 0 20 19"><path d="M1 6h3l5-4v15l-5-4H1z" fill="none" stroke="#e8e8e8" /><path d="M11 7c1 1 1 4 0 5M14 4c2 3 2 8 0 11M17 2c3 4 3 11 0 15" fill="none" stroke="#777" /></svg>
      <span class="tr-lang">英</span>
      <span class="tr-ime">拼</span>
      <div class="tr-clock">
        <span>23:19 周四</span>
        <span>2022/12/1</span>
      </div>
      <div class="tr-note">
        <svg width="20" height="17" viewBox="0 0 20 17"><path d="M0 0h20v15H9l-2 2v-2H0z" fill="#fff" /><path d="M4 4h12M4 7.500h12M4 11h9" stroke="#333" /></svg>
        <span class="tr-badge">1</span>
      </div>
    </div>
  </div>
</template>

<style scoped>
.app {
  width: 1920px;
  height: 1080px;
  display: flex;
  flex-direction: column;
  overflow: hidden;
  position: relative;
  background: #eceef0;
  color: #2c2c2c;
  font: 15px/20px "Open Sans", "Noto Sans CJK SC", sans-serif;
}
.defs { position: absolute; }

.titlebar {
  height: 37px;
  flex: none;
  display: flex;
  align-items: center;
  background: #ecedef;
  position: relative;
}
.qat { display: flex; align-items: center; padding-left: 2px; width: 960px; }
.q-new { margin-left: 7px; }
.q-open { margin-left: 8px; }
.q-save { margin-left: 8px; }
.q-undo { margin-left: 9px; }
.q-arrow { margin-left: 7px; border: 4.5px solid transparent; border-top: 5px solid #c6c9ce; border-bottom: 0; }
.q-arrow.dark { border-top-color: #555c66; }
.q-redo { margin-left: 11px; }
.q-sep { width: 1px; height: 22px; background: #cfd2d6; margin-left: 8px; }
.q-refresh { margin-left: 8px; }
.q-custom { width: 8px; height: 10px; margin-left: 9px; border-top: 2px solid #6f7780; position: relative; }
.q-custom::after { content: ""; position: absolute; left: 0; top: 2px; border: 4px solid transparent; border-top: 5px solid #6f7780; border-bottom: 0; }
.app-title { flex: none; width: 70px; margin-left: -9px; white-space: nowrap; color: #333; font-size: 16px; }
.win-ctl { margin-left: auto; display: flex; align-items: center; padding-right: 25px; gap: 49px; }

.menubar {
  height: 33px;
  flex: none;
  display: flex;
  align-items: stretch;
  background: #fff;
  position: relative;
  z-index: 1;
}
.file-tab {
  width: 76px;
  text-align: center;
  line-height: 33px;
  background: #2b5797;
  color: #fff;
}
.menu-tab { padding: 0 15px; line-height: 33px; color: #333; }
.menu-tab.active {
  color: #2b5797;
  background: #fafafa;
  border: 1px solid #b9bcc0;
  border-bottom: 0;
  padding: 0 14px 1px;
  height: 34px;
  line-height: 33px;
  box-sizing: border-box;
}
.collapse { margin: 10px 7px 0 auto; }

.ribbon {
  height: 101px;
  flex: none;
  display: flex;
  box-sizing: border-box;
  background: #fafafa;
  border-top: 1px solid #d4d5d7;
  border-bottom: 2px solid #d9dadc;
  border-left: 1px solid #d9dadc;
  margin-top: 0;
}
.r-group {
  flex: none;
  box-sizing: border-box;
  display: flex;
  margin: 3px 0 0;
  height: 94px;
  border-right: 1px solid #e3e4e6;
}
.r-group:first-child { width: 107px !important; }
.r-group.dark { border-right-color: #a0a2a5; }
.r-group.col { flex-direction: column; }
.r-large {
  display: flex;
  flex-direction: column;
  align-items: center;
  position: relative;
  padding-top: 8px;
  flex: none;
}
.r-label { margin-top: 7px; white-space: nowrap; }
.muted { color: #9c9c9c; }
.r-more {
  position: absolute;
  left: 50%;
  top: 85px;
  margin-left: -4px;
  border: 4px solid transparent;
  border-top: 5px solid #6a7078;
  border-bottom: 0;
}
.r-small { height: 32px; flex: none; display: flex; align-items: center; gap: 4px; white-space: nowrap; }
.r-small svg { flex: none; }

.workspace { flex: 1; min-height: 0; display: flex; }
.left {
  width: 608px;
  flex: none;
  display: flex;
  flex-direction: column;
  box-sizing: border-box;
  padding-right: 8px;
}
.left-head { height: 33px; flex: none; display: flex; align-items: center; padding: 0 0 0 5px; }
.left-title { color: #87909a; margin-top: -6px; }
.dock { margin-left: auto; }
.close { margin: 0 9px 0 17px; }
.left-tabs { height: 19px; flex: none; display: flex; }
.lt { padding: 0 7px; line-height: 20px; margin-left: 1px; height: 19px; box-sizing: border-box; }
.lt.active {
  background: #fff;
  border: 1px solid #b6b9bd;
  border-bottom: 0;
  width: 46px;
}
.lt + .lt { margin-left: 1px; }
.tree-box {
  height: 360px;
  flex: none;
  background: #fff;
  border: 1px solid #b6b9bd;
  border-radius: 0 0 3px 3px;
  box-sizing: border-box;
  display: flex;
  overflow: hidden;
  position: relative;
}
.tree { flex: 1; padding-top: 7px; margin-left: -1px; }
.row { height: 22px; display: flex; align-items: center; white-space: nowrap; position: relative; }
.cell { width: 25px; height: 22px; flex: none; position: relative; }
.cell:first-child { margin-left: .5px; }
.cell.g::before, .cell.t::before, .cell.e::before {
  content: "";
  position: absolute;
  left: 12px;
  top: 0;
  width: 1px;
  background: #dcdcdc;
}
.cell.g::before, .cell.t::before { bottom: 0; }
.cell.e::before { height: 11px; }
.cell.t::after, .cell.e::after {
  content: "";
  position: absolute;
  left: 12px;
  top: 11px;
  width: 12px;
  height: 1px;
  background: #dcdcdc;
}
.exp-cell { display: flex; align-items: center; justify-content: center; }
.exp {
  width: 13px;
  height: 13px;
  box-sizing: border-box;
  border: 1px solid #a8a8a8;
  border-radius: 50%;
  background: #fff;
  position: relative;
}
.exp::before {
  content: "";
  position: absolute;
  left: 2.5px;
  top: 5px;
  width: 6px;
  height: 1px;
  background: #444;
}
.exp.plus::after {
  content: "";
  position: absolute;
  left: 5px;
  top: 2.5px;
  width: 1px;
  height: 6px;
  background: #444;
}
.t-ic { flex: none; margin: 0 8px 0 3px; }
.scroll {
  position: absolute;
  top: 0;
  right: 2px;
  bottom: 0;
  width: 7px;
}
.sc-up {
  position: absolute;
  top: 19px;
  left: 0;
  border: 3.5px solid transparent;
  border-bottom: 4px solid #70767e;
  border-top: 0;
}
.sc-thumb { position: absolute; top: 27px; left: 0; width: 6px; height: 172px; background: #a3a7ab; }
.sc-down {
  position: absolute;
  bottom: 3px;
  left: 0;
  border: 3.5px solid transparent;
  border-top: 4px solid #70767e;
  border-bottom: 0;
}
.prop-head {
  height: 25px;
  flex: none;
  margin-top: 6px;
  background: #adb1b3;
  display: flex;
  line-height: 25px;
  box-sizing: border-box;
  border-bottom: 1px solid #8d9194;
  border-radius: 3px 3px 0 0;
}
.ph-a { width: 126px; padding-left: 12px; box-sizing: border-box; border-right: 1px solid #969a9d; }
.ph-b { padding-left: 11px; }
.prop-body {
  flex: 1;
  border: 1px solid #b6b9bd;
  border-top: 0;
  border-radius: 0 0 3px 3px;
  background: #eceef0;
}
.bottom-tabs {
  height: 22px;
  flex: none;
  margin-top: 1px;
  display: flex;
  background: #fff;
  align-items: flex-end;
  gap: 8px;
  padding-left: 6px;
}
.bt { line-height: 20px; height: 20px; }
.bt.on {
  width: 48px;
  box-sizing: border-box;
  text-align: center;
  background: #adb1b3;
  border: 1px solid #93979a;
  border-bottom: 0;
}

.view-col { flex: 1; min-width: 0; display: flex; flex-direction: column; }
.toolbar { height: 36px; flex: none; display: flex; align-items: center; background: #f8f8f9; }
.toolbar svg { flex: none; }
.tb-sep { width: 1px; height: 30px; background: #c9cbce; flex: none; }
.viewport {
  height: 768px;
  flex: none;
  position: relative;
  overflow: hidden;
  background: linear-gradient(#b9cde4, #e6e9ee);
}
.scene { position: absolute; inset: 0; }
.tri { font: 10px "Liberation Sans", sans-serif; }
.doc-strip { flex: 1; display: flex; align-items: flex-end; padding-left: 1px; background: #eceef0; }
.doc-tab {
  height: 20px;
  line-height: 20px;
  width: 180px;
  background: #fff;
  padding-left: 11px;
  box-sizing: border-box;
  white-space: nowrap;
}

.status {
  height: 33px;
  flex: none;
  box-sizing: border-box;
  display: flex;
  align-items: center;
  justify-content: space-between;
  background: #ecedef;
  border-top: 1px solid #b4b6b9;
  border-bottom: 1px solid #b4b6b9;
  padding: 0 2px 0 6px;
  white-space: nowrap;
}
.st-left { color: #7b7f84; font-size: 15.7px; }
.st-right { color: #333; font-size: 15.8px; }

.taskbar {
  height: 50px;
  flex: none;
  display: flex;
  align-items: center;
  background: #1a1a1a;
  position: relative;
}
.tk-win { margin-left: 19px; flex: none; }
.tk-search { margin-left: 38px; flex: none; }
.tk-box {
  margin-left: 18px;
  width: 275px;
  height: 43px;
  flex: none;
  background: #ececec;
  color: #222;
  display: flex;
  align-items: center;
  padding-left: 8px;
  box-sizing: border-box;
}
.tk-up { margin-left: 3px; border: 3px solid transparent; border-bottom: 5px solid #999; border-top: 0; }
.tk-query { margin-left: 9px; margin-top: -2px; }
.tk-btn {
  margin-left: auto;
  width: 70px;
  height: 43px;
  line-height: 41px;
  text-align: center;
  background: #2b8cff;
  color: #fff;
}
.tk-sep { width: 3px; height: 26px; margin-left: 8px; border-left: 1px solid #555; border-right: 1px solid #555; box-sizing: border-box; flex: none; }
.tk-folder { margin-left: 32px; flex: none; }
.tk-excel { margin-left: 32px; flex: none; }
.tk-word { margin-left: 32px; flex: none; }
.tk-app {
  height: 50px;
  flex: none;
  display: flex;
  align-items: center;
  justify-content: center;
  box-sizing: border-box;
  border-bottom: 3px solid #7cb8e8;
}
.tk-app.swirl { width: 51px; margin-left: 22px; }
.tk-app.cur { width: 61px; margin-left: 8px; background: #4a4a4a; }
.tr-help { margin-left: 737px; flex: none; }
.tr-up { margin-left: 14px; flex: none; }
.tr-wifi { margin-left: 15px; flex: none; }
.tr-game { margin-left: 9px; flex: none; }
.tr-bat { margin-left: 40px; flex: none; }
.tr-vol { margin-left: 7px; flex: none; }
.tr-lang { margin-left: 8px; font-size: 20px; color: #fff; flex: none; width: 22px; }
.tr-ime {
  margin-left: 15px;
  width: 20px;
  height: 20px;
  line-height: 20px;
  text-align: center;
  font-size: 15px;
  background: #fff;
  color: #000;
  flex: none;
}
.tr-clock {
  margin-left: 27px;
  width: 76px;
  flex: none;
  display: flex;
  flex-direction: column;
  align-items: center;
  color: #f0f0f0;
  line-height: 21px;
  font-size: 16px;
  white-space: nowrap;
}
.tr-note { margin-left: 29px; position: relative; flex: none; margin-top: -8px; height: 17px; }
.tr-badge {
  position: absolute;
  left: 9px;
  top: 9px;
  width: 20px;
  height: 20px;
  box-sizing: border-box;
  border: 1px solid #888;
  border-radius: 50%;
  background: #3a3a3a;
  color: #fff;
  font-size: 13px;
  font-weight: 700;
  line-height: 18px;
  text-align: center;
}
</style>
